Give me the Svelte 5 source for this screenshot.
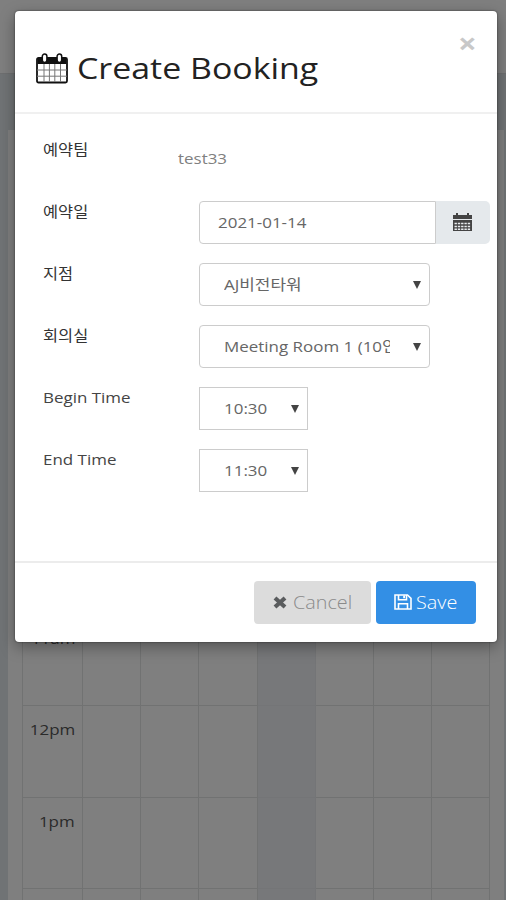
<script>
  const hours = ['11am', '12pm', '1pm', ''];
  const days = [0, 1, 2, 3, 4, 5, 6];
  const today = 3;

  const branches = ['AJ비전타워'];
  const rooms = ['Meeting Room 1 (10인실)'];

  let team = $state('test33');
  let date = $state('2021-01-14');
  let branch = $state(branches[0]);
  let room = $state(rooms[0]);
  let begin = $state('10:30');
  let end = $state('11:30');
</script>

{#snippet picker(value, size)}
  <button class="picker {size}" type="button">
    <span class="clip"><span class="wide">{value}</span></span>
    <svg class="caret" viewBox="0 0 8 8" preserveAspectRatio="none"><path d="M0 0h8L4 8z" /></svg>
  </button>
{/snippet}

<div class="page">
  <div class="navbar"></div>
  <div class="card">
    <div class="grid">
      {#each hours as hour}
        <div class="hour"><span class="wide">{hour}</span></div>
        {#each days as day}
          <div class="slot" class:today={day === today}></div>
        {/each}
      {/each}
    </div>
  </div>

  <div class="backdrop">
    <div class="modal" role="dialog">
      <header>
        <svg class="title-icon" viewBox="0 0 32 31" preserveAspectRatio="none">
          <path d="M1.5 5h29v6h-29z" fill="#111" />
          <rect x="1" y="5" width="30" height="24.5" rx="1.5" fill="none" stroke="#111" stroke-width="1.8" />
          <path d="M8 11v18M13.4 11v18M18.8 11v18M24.5 11v18M1 17h30M1 23.2h30" stroke="#777" stroke-width="1" />
          <rect x="6.3" y="1" width="4.6" height="8.4" rx="2.3" fill="#fff" stroke="#111" stroke-width="1.5" />
          <rect x="21.1" y="1" width="4.6" height="8.4" rx="2.3" fill="#fff" stroke="#111" stroke-width="1.5" />
        </svg>
        <h1><span class="wide">Create Booking</span></h1>
        <button class="close" type="button" aria-label="Close"><span class="wide">×</span></button>
      </header>

      <div class="body">
        <div class="row">
          <span class="label ko"><span class="wide">예약팀</span></span>
          <span class="static"><span class="wide">{team}</span></span>
        </div>
        <div class="row">
          <span class="label ko"><span class="wide">예약일</span></span>
          <div class="date">
            <span class="date-value"><span class="wide">{date}</span></span>
            <button class="addon" type="button" aria-label="Calendar">
              <svg viewBox="0 0 19 18" preserveAspectRatio="none">
                <path d="M0 2h19v4H0zM0 7h19v11H0z" fill="#444" />
                <path d="M3 0h2v3H3zM14 0h2v3h-2z" fill="#444" />
                <path d="M1.5 10.5h16M1.5 13.5h16M1.5 16.3h16" stroke="#e9ecef" stroke-width="1.6" stroke-dasharray="2.4 .9" />
              </svg>
            </button>
          </div>
        </div>
        <div class="row">
          <span class="label ko"><span class="wide">지점</span></span>
          {@render picker(branch, 'large')}
        </div>
        <div class="row">
          <span class="label ko"><span class="wide">회의실</span></span>
          {@render picker(room, 'large')}
        </div>
        <div class="row">
          <span class="label"><span class="wide">Begin Time</span></span>
          {@render picker(begin, 'small')}
        </div>
        <div class="row">
          <span class="label"><span class="wide">End Time</span></span>
          {@render picker(end, 'small')}
        </div>
      </div>

      <footer>
        <button class="btn cancel" type="button">
          <svg viewBox="0 0 14 13" preserveAspectRatio="none"><path d="M2 2l10 9M12 2L2 11" stroke="#5a5c5e" stroke-width="4.2" /></svg>
          <span class="wide">Cancel</span>
        </button>
        <button class="btn save" type="button">
          <svg viewBox="0 0 18 16" preserveAspectRatio="none" fill="none" stroke="#fff" stroke-width="1.6">
            <path d="M1 1h12.5L17 4.4V15H1z" />
            <path d="M4.5 1v4.8h8V1M4.5 15v-5.2h9V15" />
            <path d="M9.2 1.5h1.8v2.8H9.2z" fill="#fff" stroke="none" />
          </svg>
          <span class="wide">Save</span>
        </button>
      </footer>
    </div>
  </div>
</div>

<style>
  :global(body) {
    margin: 0;
  }
  .page {
    position: relative;
    box-sizing: border-box;
    height: 900px;
    overflow: hidden;
    background: #e0e6ea;
    color: #444;
    font-family: "Open Sans", "Noto Sans CJK KR", sans-serif;
    font-size: 15px;
  }
  button {
    box-sizing: border-box;
    padding: 0;
    border: 0;
    background: none;
    color: inherit;
    font: inherit;
    text-align: left;
  }
  /* widened lettering, stretched along x only */
  .wide {
    display: inline-block;
    white-space: nowrap;
    transform: scaleX(1.13);
    transform-origin: left center;
  }

  .navbar {
    box-sizing: border-box;
    height: 74px;
    border-bottom: 1px solid #dcdfe0;
    background: #fff;
  }
  .card {
    box-sizing: border-box;
    height: 770px;
    margin: 56px 2px 0 8px;
    padding: 485px 14px 0;
    background: #fff;
  }
  .grid {
    display: grid;
    grid-template-columns: 60px repeat(7, 58.2px);
    grid-auto-rows: 91.3px;
    border-left: 1px solid #e3e4e5;
  }
  .hour,
  .slot {
    box-sizing: border-box;
    border-right: 1px solid #e3e4e5;
    border-bottom: 1px solid #e3e4e5;
  }
  .hour {
    padding: 13px 7px 0 0;
    color: #555;
    font-size: 15px;
    line-height: 20px;
    text-align: right;
  }
  .hour .wide {
    transform-origin: right center;
  }
  .slot.today {
    background: #eff1f4;
    border-color: #e9ebee;
  }

  .backdrop {
    position: absolute;
    inset: 0;
    padding: 11px 9px 0 15px;
    background: rgba(0, 0, 0, 0.5);
  }
  .modal {
    display: flex;
    flex-direction: column;
    height: 631px;
    border-radius: 4px;
    background: #fff;
    box-shadow: 0 5px 15px rgba(0, 0, 0, 0.35), 0 0 2px rgba(0, 0, 0, 0.6);
  }
  header {
    display: flex;
    box-sizing: border-box;
    height: 103px;
    padding: 0 20px;
    border-bottom: 2px solid #f0f0f0;
  }
  .title-icon {
    width: 32px;
    height: 31px;
    margin: 42px 9px 0 1px;
  }
  h1 {
    flex: 1;
    margin: 37px 0 0;
    color: #222;
    font-size: 30px;
    font-weight: 400;
    line-height: 40px;
  }
  .close {
    width: 19px;
    height: 30px;
    margin-top: 17px;
    color: #c8c8c8;
    font-size: 29px;
    font-weight: 700;
    line-height: 30px;
  }
  .body {
    flex: 1;
    padding: 25px 7px 0 28px;
  }
  .row {
    display: flex;
    height: 62px;
  }
  .label {
    width: 156px;
    flex-shrink: 0;
    line-height: 21px;
  }
  .label.ko {
    color: #333;
    font-size: 14.5px;
  }
  .static {
    margin: 8px 0 0 -21px;
    color: #808080;
    line-height: 22px;
  }
  .date,
  .picker {
    display: flex;
    box-sizing: border-box;
    height: 43px;
    border: 1px solid #ccc;
    border-radius: 4px;
    color: #666;
  }
  .date {
    width: 291px;
    border: 0;
  }
  .date-value {
    flex: 1;
    padding-left: 18px;
    border: 1px solid #ccc;
    border-radius: 4px 0 0 4px;
    line-height: 41px;
  }
  .addon {
    display: flex;
    align-items: center;
    justify-content: center;
    width: 54px;
    padding: 0 2px 2px 0;
    border-radius: 0 5px 5px 0;
    background: #e5e9ec;
  }
  .addon svg {
    width: 19px;
    height: 18px;
  }
  .picker {
    align-items: center;
    padding-left: 24px;
  }
  .picker.large {
    width: 231px;
  }
  .picker.small {
    width: 109px;
    border-radius: 0;
  }
  .clip {
    width: 166px;
    overflow: hidden;
    padding-bottom: 2px;
    line-height: 28px;
  }
  .small .clip {
    width: 49px;
  }
  .caret {
    width: 8px;
    height: 8px;
    margin-left: 23px;
    fill: #444;
  }
  .small .caret {
    margin-left: 18px;
  }
  footer {
    display: flex;
    box-sizing: border-box;
    height: 81px;
    justify-content: flex-end;
    gap: 5px;
    padding: 18px 21px 0;
    border-top: 2px solid #ececec;
  }
  .btn {
    display: flex;
    align-items: center;
    height: 43px;
    padding-bottom: 2px;
    border-radius: 4px;
    font-size: 18px;
    font-weight: 300;
  }
  .btn .wide {
    transform: scaleX(1.1);
  }
  .cancel {
    width: 117px;
    padding-left: 19px;
    background: #dcdcdc;
    color: #8a8a8a;
  }
  .cancel svg {
    width: 14px;
    height: 13px;
    margin: 2px 6px 0 0;
  }
  .save {
    width: 100px;
    padding-left: 18px;
    background: #338fe5;
    color: #fff;
  }
  .save svg {
    width: 18px;
    height: 16px;
    margin: 1px 4px 0 0;
  }
</style>
